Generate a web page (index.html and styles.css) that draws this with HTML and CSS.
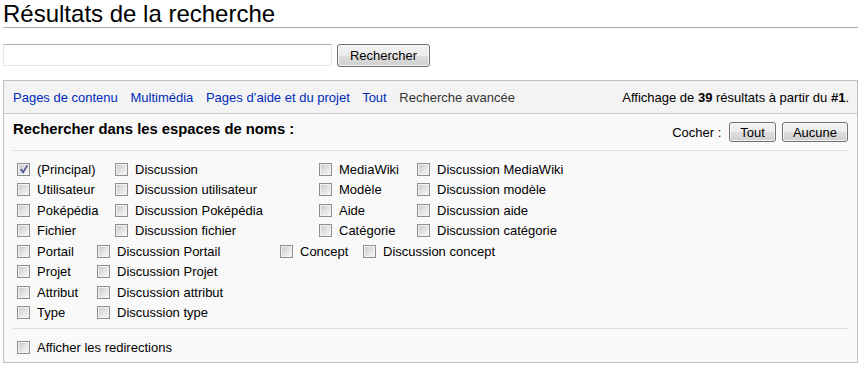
FILE: index.html
```html
<!DOCTYPE html>
<html lang="fr">
<head>
    <meta charset="UTF-8">
    <title>Résultats de la recherche</title>
    <link rel="stylesheet" href="styles.css">
</head>
<body>
    <h1 class="page-title">Résultats de la recherche</h1>

    <!-- Search form -->
    <form class="search-row">
        <input type="text" class="search-input">
        <button type="submit" class="btn btn-search">Rechercher</button>
    </form>

    <div class="search-box">
        <!-- Profile tabs -->
        <div class="profiles">
            <div class="profile-links">
                <a href="#">Pages de contenu</a>
                <a href="#">Multimédia</a>
                <a href="#">Pages d’aide et du projet</a>
                <a href="#">Tout</a>
                <span class="current">Recherche avancée</span>
            </div>
            <div class="results-info">Affichage de <b>39</b> résultats à partir du <b>#1</b>.</div>
        </div>

        <!-- Namespaces -->
        <div class="ns-area">
            <div class="ns-head">
                <h2>Rechercher dans les espaces de noms :</h2>
                <div class="toggle">
                    <span>Cocher :</span>
                    <button class="btn btn-small">Tout</button>
                    <button class="btn btn-small">Aucune</button>
                </div>
            </div>

            <div class="ns-table ns-main">
                <div class="ns-col">
                    <label><input type="checkbox" checked>(Principal)</label>
                    <label><input type="checkbox">Utilisateur</label>
                    <label><input type="checkbox">Poképédia</label>
                    <label><input type="checkbox">Fichier</label>
                </div>
                <div class="ns-col">
                    <label><input type="checkbox">Discussion</label>
                    <label><input type="checkbox">Discussion utilisateur</label>
                    <label><input type="checkbox">Discussion Poképédia</label>
                    <label><input type="checkbox">Discussion fichier</label>
                </div>
                <div class="ns-col">
                    <label><input type="checkbox">MediaWiki</label>
                    <label><input type="checkbox">Modèle</label>
                    <label><input type="checkbox">Aide</label>
                    <label><input type="checkbox">Catégorie</label>
                </div>
                <div class="ns-col">
                    <label><input type="checkbox">Discussion MediaWiki</label>
                    <label><input type="checkbox">Discussion modèle</label>
                    <label><input type="checkbox">Discussion aide</label>
                    <label><input type="checkbox">Discussion catégorie</label>
                </div>
            </div>

            <div class="ns-table ns-extra">
                <div class="ns-col">
                    <label><input type="checkbox">Portail</label>
                    <label><input type="checkbox">Projet</label>
                    <label><input type="checkbox">Attribut</label>
                    <label><input type="checkbox">Type</label>
                </div>
                <div class="ns-col">
                    <label><input type="checkbox">Discussion Portail</label>
                    <label><input type="checkbox">Discussion Projet</label>
                    <label><input type="checkbox">Discussion attribut</label>
                    <label><input type="checkbox">Discussion type</label>
                </div>
                <div class="ns-col">
                    <label><input type="checkbox">Concept</label>
                </div>
                <div class="ns-col">
                    <label><input type="checkbox">Discussion concept</label>
                </div>
            </div>

            <div class="redirects">
                <label><input type="checkbox">Afficher les redirections</label>
            </div>
        </div>
    </div>
</body>
</html>
```

FILE: styles.css
```css
body {
    margin: 0;
    padding: 0 6px 0 3px;
    font-family: Arial, "Liberation Sans", sans-serif;
    font-size: 13px;
    color: #000;
    background: #fff;
}

.page-title {
    margin: 0;
    font-size: 24px;
    font-weight: normal;
    line-height: 27px;
    border-bottom: 1px solid #aaa;
}

.search-row {
    display: flex;
    align-items: flex-start;
    gap: 5px;
    margin: 16px 0 0;
}

.search-input {
    box-sizing: border-box;
    width: 329px;
    height: 22px;
    margin: 0;
    border: 1px solid #e3e9ef;
    border-top-color: #abadb3;
    background: #fff;
}

.btn {
    box-sizing: border-box;
    margin: 0;
    padding: 0 8px;
    font-family: Arial, "Liberation Sans", sans-serif;
    font-size: 13px;
    color: #000;
    border: 1px solid #707070;
    border-radius: 3px;
    background: linear-gradient(#f2f2f2 0%, #ebebeb 50%, #dddddd 51%, #cfcfcf 100%);
    box-shadow: inset 0 0 0 1px rgba(255,255,255,0.7);
}

.btn-search {
    width: 93px;
    height: 23px;
}

.search-box {
    margin-top: 13px;
    border: 1px solid #c0c0c0;
    background: #f9f9f9;
}

.profiles {
    display: flex;
    justify-content: space-between;
    align-items: center;
    height: 32px;
    padding: 0 8px 0 9px;
    background: #f3f3f3;
    border-bottom: 1px solid #c8c8c8;
}

.profile-links a,
.profile-links .current {
    margin-right: 9px;
}

.profile-links a {
    color: #002bb8;
    text-decoration: none;
}

.profile-links .current {
    color: #333;
}

.ns-area {
    padding: 0 9px 4px;
}

.ns-head {
    display: flex;
    justify-content: space-between;
    align-items: flex-start;
    padding: 7px 0 8px;
    border-bottom: 1px solid #ddd;
}

.ns-head h2 {
    margin: 0;
    font-size: 14.8px;
    line-height: 16px;
    font-weight: bold;
}

.toggle {
    display: flex;
    align-items: center;
    gap: 6px;
    margin-top: 1px;
}

.toggle span {
    margin-right: 2px;
}

.btn-small {
    height: 20px;
    padding: 0 10px;
}

.ns-table {
    display: flex;
}

.ns-main {
    margin-top: 8px;
}

.ns-col {
    display: flex;
    flex-direction: column;
}

.ns-main .ns-col:nth-child(1) { width: 98px; }
.ns-main .ns-col:nth-child(2) { width: 204px; }
.ns-main .ns-col:nth-child(3) { width: 98px; }

.ns-extra .ns-col:nth-child(1) { width: 80px; }
.ns-extra .ns-col:nth-child(2) { width: 183px; }
.ns-extra .ns-col:nth-child(3) { width: 83px; }

.ns-area label {
    display: flex;
    align-items: center;
    height: 20.5px;
    white-space: nowrap;
}

.ns-area input[type="checkbox"] {
    appearance: none;
    -webkit-appearance: none;
    position: relative;
    flex: none;
    box-sizing: border-box;
    width: 13px;
    height: 13px;
    margin: 0 7px 0 4px;
    border: 1px solid #8e8f8f;
    background: linear-gradient(135deg, #c8c8c8, #fbfbfb);
    box-shadow: inset 0 0 0 1px #f2f2f2;
}

.ns-area input[type="checkbox"]:checked::before {
    content: "";
    position: absolute;
    left: 2px;
    top: 1px;
    width: 8px;
    height: 9px;
    background: #4a5a8c;
    clip-path: polygon(0 55%, 22% 42%, 38% 68%, 86% 0, 100% 12%, 40% 100%);
}

.redirects {
    margin-top: 5px;
    padding-top: 8px;
    border-top: 1px solid #ddd;
}
```
